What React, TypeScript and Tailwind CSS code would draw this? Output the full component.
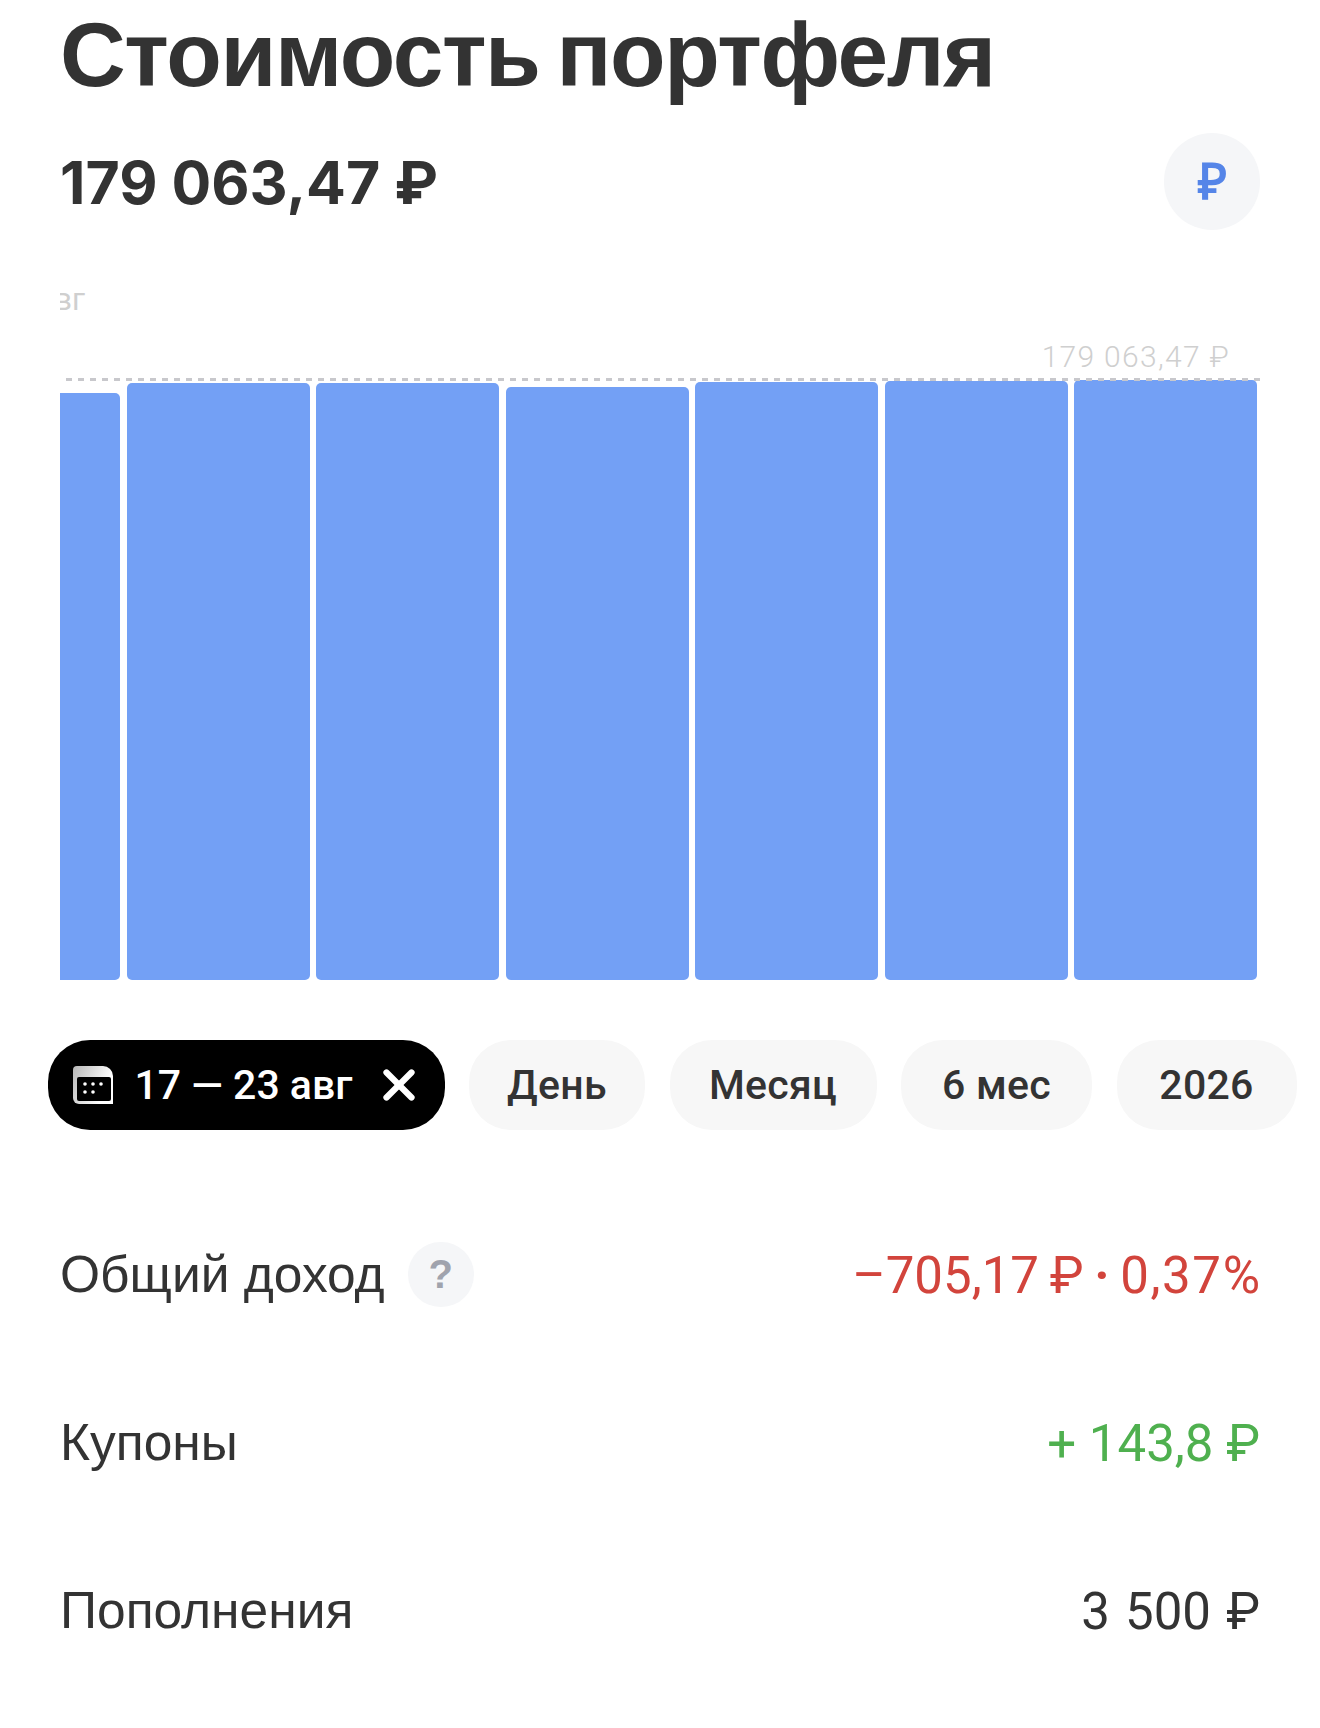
import { X } from 'lucide-react'

const bars = [587, 597, 597, 593, 598, 599, 600]
const periods = [
  { label: 'День', width: 'w-[176px]' },
  { label: 'Месяц', width: 'w-[207px]' },
  { label: '6 мес', width: 'w-[191px]' },
  { label: '2026', width: 'w-[180px]' },
]

const roboto = "font-['Roboto',sans-serif]"

function CalendarIcon() {
  return (
    <svg width="40" height="38" viewBox="0 0 40 38" fill="none" className="shrink-0">
      <defs>
        <linearGradient id="cal-head" x1="0" y1="0" x2="36" y2="16" gradientUnits="userSpaceOnUse">
          <stop offset="0" stopColor="#b8b8b8" />
          <stop offset="1" stopColor="#ffffff" />
        </linearGradient>
      </defs>
      <path d="M4 0h26a10 10 0 0 1 10 10v28H6a6 6 0 0 1-6-6V4a4 4 0 0 1 4-4z" fill="url(#cal-head)" />
      <rect x="4" y="11" width="34" height="24" rx="2" fill="#000" />
      <g fill="#fff">
        <circle cx="12" cy="18" r="1.8" />
        <circle cx="20" cy="18" r="1.8" />
        <circle cx="28" cy="18" r="1.8" />
        <circle cx="12" cy="26" r="1.8" />
        <circle cx="20" cy="26" r="1.8" />
      </g>
    </svg>
  )
}

function Row({ label, value, color, hint }: { label: string; value: React.ReactNode; color: string; hint?: boolean }) {
  return (
    <div className="flex h-[168px] items-center justify-between">
      <div className="flex items-center">
        <span className="font-['Liberation_Sans',sans-serif] text-[51.5px] leading-none text-[#333]">{label}</span>
        {hint && (
          <span className="mb-[2px] ml-[23px] flex h-[65px] w-[66px] items-center justify-center rounded-full bg-[#f5f6f8] font-['Liberation_Sans',sans-serif] text-[40px] font-bold text-[#a0a3ad]">
            ?
          </span>
        )}
      </div>
      <span className={`${roboto} text-[51px] leading-none ${color}`}>{value}</span>
    </div>
  )
}

export default function App() {
  return (
    <div className="h-[1728px] w-[1320px] overflow-hidden bg-white pl-[60px] pr-[60px] text-[#333]">
      <h1 className="pt-[11px] font-['Liberation_Sans',sans-serif] text-[91px] font-bold leading-[88px] tracking-[-1.4px] whitespace-nowrap [word-spacing:-7px]">
        Стоимость портфеля
      </h1>

      {/* total + currency switch */}
      <div className="mt-[34px] flex h-[96px] items-center justify-between">
        <span className="pt-[3px] font-['Inter',sans-serif] text-[59px] font-bold leading-none">179 063,47 ₽</span>
        <button className="flex h-[97px] w-[96px] items-center justify-center rounded-full bg-[#f5f6f8] pt-[2px] font-['Liberation_Sans',sans-serif] text-[50px] font-bold text-[#5585e8]">
          ₽
        </button>
      </div>

      {/* chart */}
      <div className="relative mt-[51px] h-[700px] overflow-hidden">
        <span className={`${roboto} absolute right-[1175px] top-[3px] text-[31px] leading-[34px] text-[#cfcfcf]`}>авг</span>
        <span className={`${roboto} absolute right-[30px] top-[59px] text-[30px] font-light leading-[36px] tracking-[1.3px] text-[#cfcfcf]`}>
          179 063,47 ₽
        </span>
        <div className="flex h-full items-end justify-end gap-[6.5px] pr-[3px]">
          {bars.map((h, i) => (
            <div key={i} className="w-[183px] shrink-0 rounded-[5px] bg-[#73a0f5]" style={{ height: h }} />
          ))}
        </div>
        <div className="absolute left-[6px] right-0 top-[98px] h-[3px] bg-[repeating-linear-gradient(90deg,#c8c8cc_0_6px,transparent_6px_12px)]" />
      </div>

      {/* period chips */}
      <div className="-ml-[12.5px] mt-[60px] flex h-[90px] gap-[24.5px] whitespace-nowrap">
        <div className="flex w-[397px] shrink-0 items-center rounded-[42px] bg-black pl-[25px] text-white">
          <CalendarIcon />
          <span className={`${roboto} ml-[22px] text-[41px] font-medium leading-none`}>17 — 23 авг</span>
          <X className="ml-[22px] shrink-0" size={50} strokeWidth={3} />
        </div>
        {periods.map((p) => (
          <div
            key={p.label}
            className={`${roboto} ${p.width} flex shrink-0 items-center justify-center rounded-[42px] bg-[#f7f7f7] text-[41px] font-medium leading-none tracking-[0.3px] text-[#333]`}
          >
            {p.label}
          </div>
        ))}
      </div>

      {/* summary rows */}
      <div className="mt-[61px]">
        <Row
          label="Общий доход"
          value={
            <>
              –705,17 ₽ <span className="font-bold">·</span> <span className="tracking-[1.6px]">0,37</span>%
            </>
          }
          color="text-[#d2443c] [word-spacing:-2px]"
          hint
        />
        <Row label="Купоны" value="+ 143,8 ₽" color="text-[#4fb04f]" />
        <Row label="Пополнения" value="3 500 ₽" color="text-[#333] [word-spacing:2.5px]" />
      </div>
    </div>
  )
}
